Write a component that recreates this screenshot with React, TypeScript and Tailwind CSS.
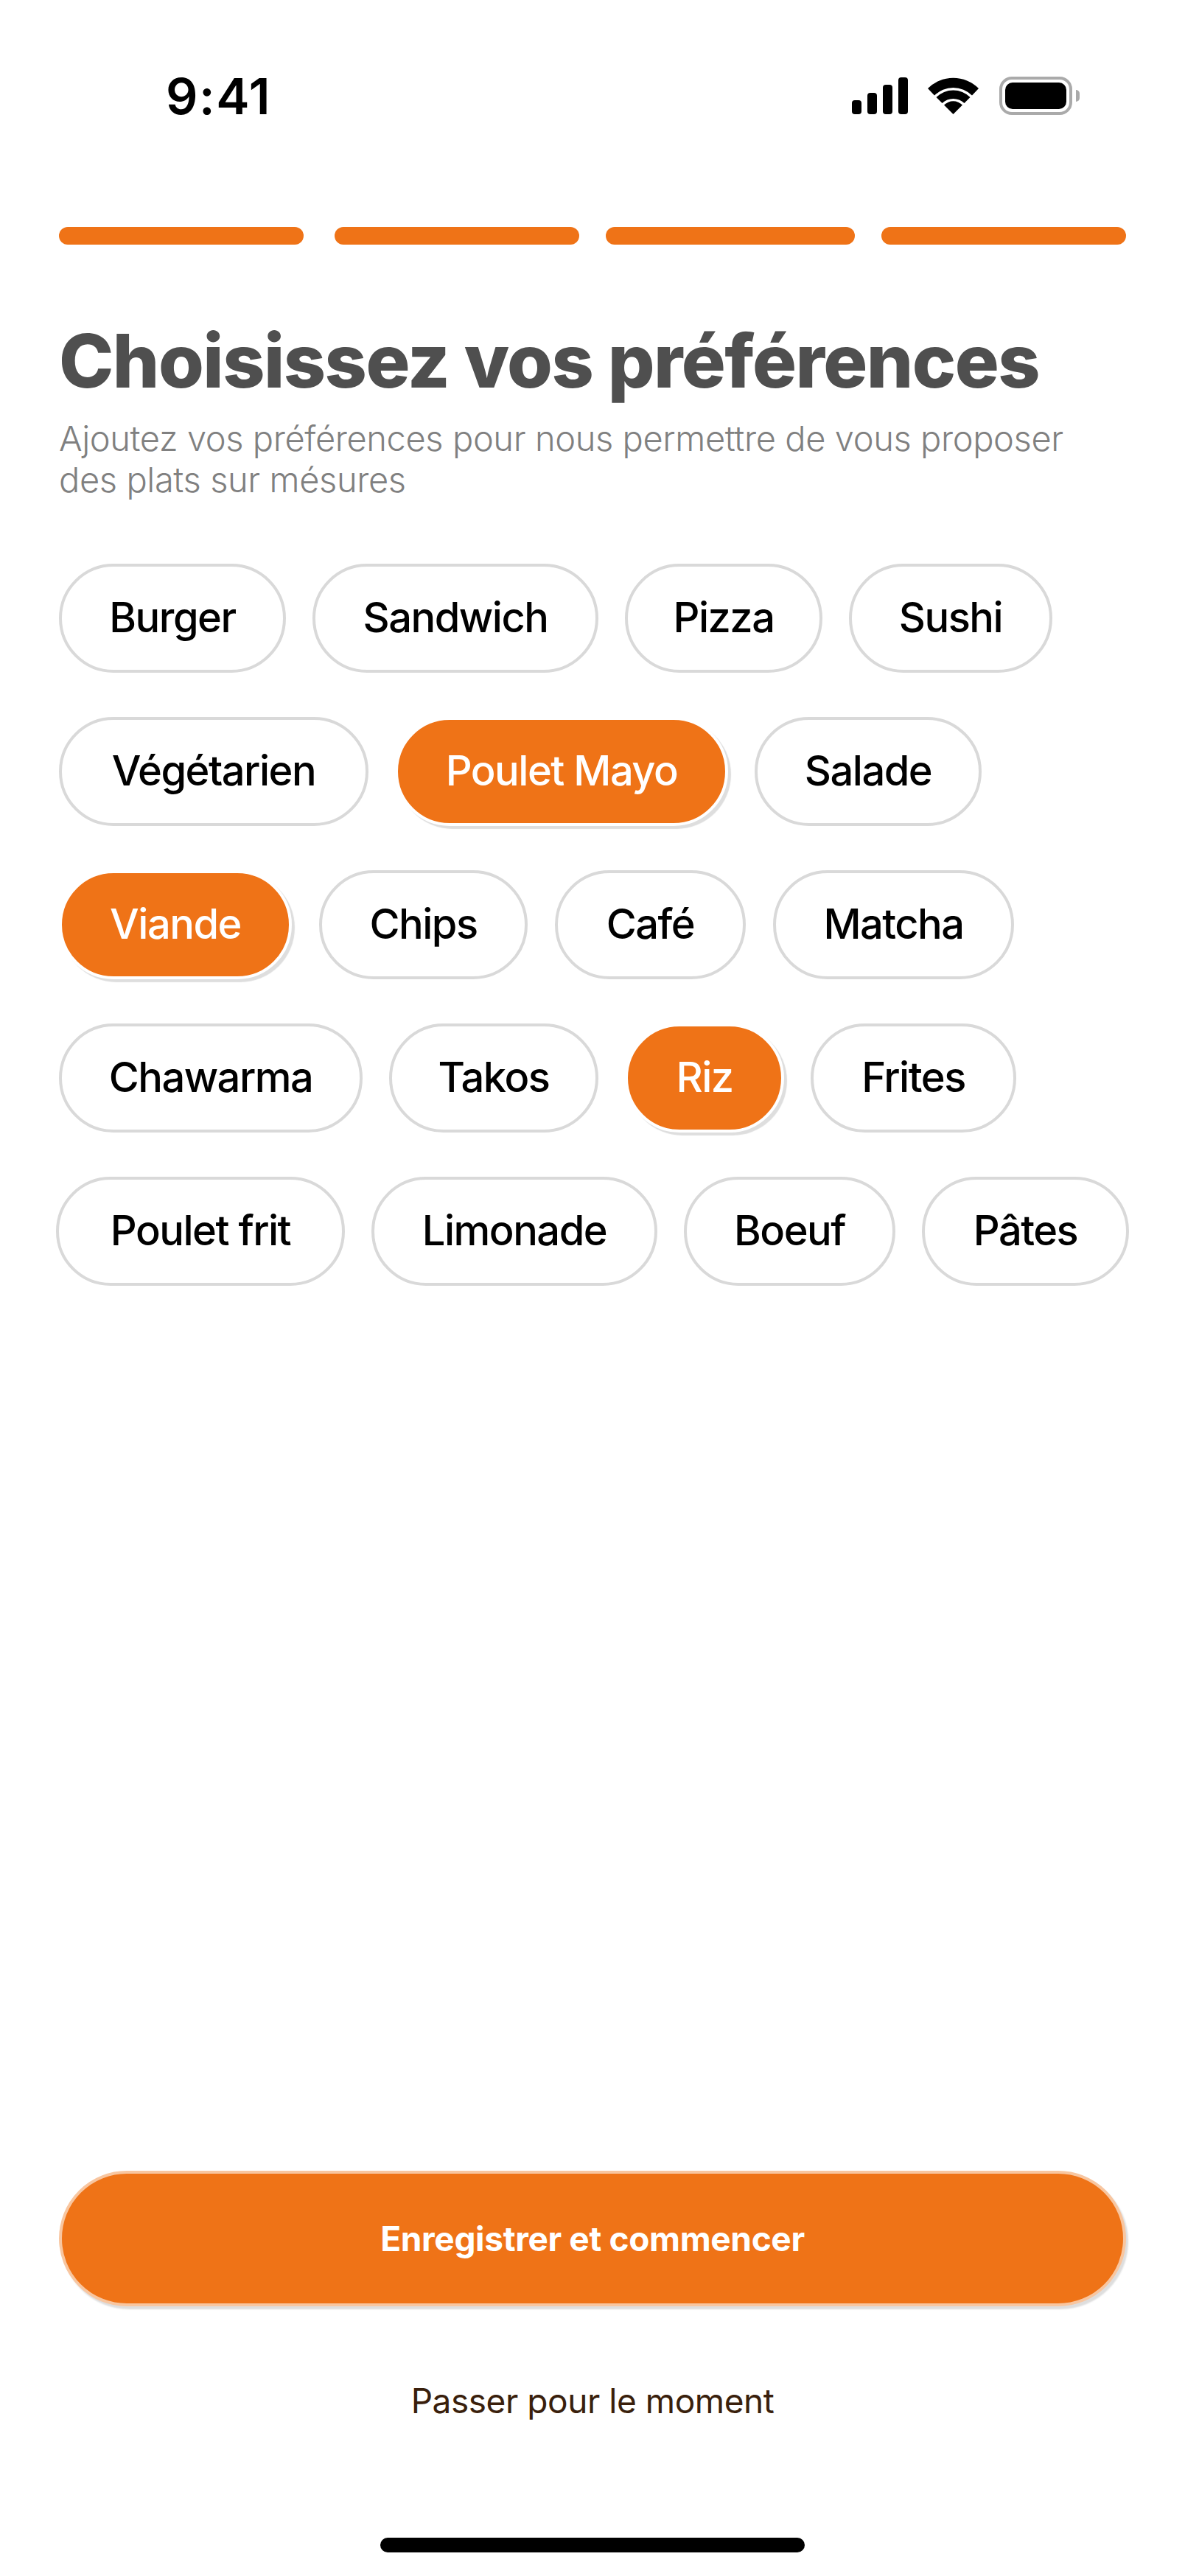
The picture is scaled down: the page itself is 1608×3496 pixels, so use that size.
const chipBase = "h-[148px] shrink-0 rounded-full border-4 flex items-center justify-center pb-[2px] text-[56px] leading-none font-medium font-['Inter',sans-serif] tracking-[-1.5px]";
const off = "border-[#d9d9d9] bg-white text-black";
const on = "border-white bg-[#ef7317] text-white shadow-[4px_4px_1px_#dedede]";

function Chip({ label, width, active }: { label: string; width: string; active?: boolean }) {
  return <div className={`${chipBase} ${width} ${active ? on : off}`}>{label}</div>;
}

function Signal() {
  return (
    <div className="flex items-end gap-[8px] h-[50px]">
      <div className="w-[13px] h-[19px] rounded-[4px] bg-black" />
      <div className="w-[13px] h-[29px] rounded-[4px] bg-black" />
      <div className="w-[13px] h-[40px] rounded-[4px] bg-black" />
      <div className="w-[13px] h-[50px] rounded-[4px] bg-black" />
    </div>
  );
}

function Wifi() {
  return (
    <svg width="69" height="50" viewBox="0 0 69 50">
      <path d="M0 15 A49 49 0 0 1 69 15 L60 24.5 A36 36 0 0 0 9 24.5 Z" fill="#000" />
      <path d="M11.5 27 A32.5 32.5 0 0 1 57.5 27 L49.5 35 A21.5 21.5 0 0 0 19.5 35 Z" fill="#000" />
      <path d="M22 37.5 A17.7 17.7 0 0 1 47 37.5 L34.5 50 Z" fill="#000" />
    </svg>
  );
}

function Battery() {
  return (
    <div className="flex items-center">
      <div className="w-[99px] h-[52px] rounded-[17px] border-[4px] border-[#aaaaaa] p-[4px]">
        <div className="w-full h-full rounded-[10px] bg-black" />
      </div>
      <div className="ml-[5px] w-[5px] h-[16px] rounded-r-[5px] bg-[#aaaaaa]" />
    </div>
  );
}

export default function App() {
  return (
    <div className="w-[1608px] h-[3496px] bg-white flex flex-col font-['Inter',sans-serif]">
      <div className="flex items-center justify-between h-[52px] mt-[104px] pl-[225px] pr-[143px]">
        <div className="text-[68px] leading-none font-semibold text-black font-['Inter',sans-serif] tracking-[1.5px]">9:41</div>
        <div className="flex items-center gap-[27px]">
          <Signal />
          <div className="flex items-center gap-[28px]">
            <Wifi />
            <Battery />
          </div>
        </div>
      </div>

      <div className="flex mt-[152px] px-[80px]">
        <div className="w-[332px] h-[24px] rounded-[12px] bg-[#ef7317]" />
        <div className="w-[332px] h-[24px] rounded-[12px] bg-[#ef7317] ml-[42px]" />
        <div className="w-[338px] h-[24px] rounded-[12px] bg-[#ef7317] ml-[36px]" />
        <div className="w-[332px] h-[24px] rounded-[12px] bg-[#ef7317] ml-[36px]" />
      </div>

      <h1 className="mt-[98px] ml-[80px] text-[100px] leading-[120px] font-extrabold text-[#4f4f4f] tracking-[-1.5px] whitespace-nowrap">
        Choisissez vos préférences
      </h1>
      <p className="mt-[17px] ml-[80px] w-[1448px] text-[47px] leading-[56px] font-light text-[#808080] tracking-[-0.4px] whitespace-nowrap">
        Ajoutez vos préférences pour nous permettre de vous proposer
        <br />
        des plats sur mésures
      </p>

      <div className="mt-[86px] flex flex-col gap-[60px]">
        <div className="flex gap-[36px] ml-[80px]">
          <Chip label="Burger" width="w-[308px]" />
          <Chip label="Sandwich" width="w-[388px]" />
          <Chip label="Pizza" width="w-[268px]" />
          <Chip label="Sushi" width="w-[276px]" />
        </div>
        <div className="flex gap-[36px] ml-[80px]">
          <Chip label="Végétarien" width="w-[420px]" />
          <Chip label="Poulet Mayo" width="w-[452px]" active />
          <Chip label="Salade" width="w-[308px]" />
        </div>
        <div className="flex gap-[37px] ml-[80px]">
          <Chip label="Viande" width="w-[316px]" active />
          <Chip label="Chips" width="w-[283px]" />
          <Chip label="Café" width="w-[259px]" />
          <Chip label="Matcha" width="w-[327px]" />
        </div>
        <div className="flex gap-[36px] ml-[80px]">
          <Chip label="Chawarma" width="w-[412px]" />
          <Chip label="Takos" width="w-[284px]" />
          <Chip label="Riz" width="w-[216px]" active />
          <Chip label="Frites" width="w-[279px]" />
        </div>
        <div className="flex gap-[36px] ml-[76px]">
          <Chip label="Poulet frit" width="w-[392px]" />
          <Chip label="Limonade" width="w-[388px]" />
          <Chip label="Boeuf" width="w-[287px]" />
          <Chip label="Pâtes" width="w-[281px]" />
        </div>
      </div>

      <div className="mt-auto px-[80px]">
        <div className="h-[184px] rounded-full border-4 border-[#f8c6a0] bg-[#ef7317] shadow-[3px_4px_2px_#dedede] flex items-center justify-center text-[46px] leading-none font-bold text-white tracking-[-0.35px]">
          Enregistrer et commencer
        </div>
      </div>
      <div className="mt-[100px] text-center text-[46px] leading-[56px] font-normal text-[#3a1f0c] tracking-[-0.45px]">
        Passer pour le moment
      </div>
      <div className="mt-[158px] mb-[32px] mx-auto w-[576px] h-[20px] rounded-[10px] bg-black" />
    </div>
  );
}
